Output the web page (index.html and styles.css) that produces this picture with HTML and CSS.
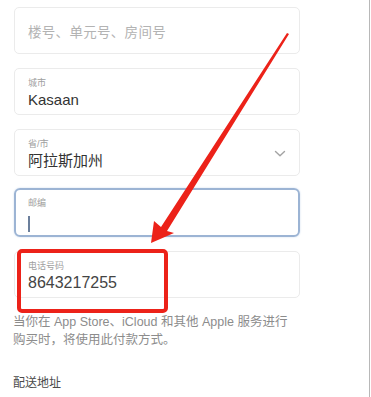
FILE: index.html
```html
<!DOCTYPE html>
<html lang="zh">
  <head>
    <meta charset="utf-8" />
    <title>付款方式</title>
    <meta name="viewport" content="width=device-width, initial-scale=1" />
    <link rel="stylesheet" href="styles.css">
  </head>
  <body>
    <div class="page">
      <div class="form">
        <div class="field field-plain">
          <span class="placeholder">楼号、单元号、房间号</span>
        </div>

        <div class="field">
          <div class="label">城市</div>
          <div class="value">Kasaan</div>
        </div>

        <div class="field field-select">
          <div>
            <div class="label">省/市</div>
            <div class="value">阿拉斯加州</div>
          </div>
          <svg class="chevron" width="12" height="8" viewBox="0 0 12 8">
            <path d="M1.5 1.5 L6 5.8 L10.5 1.5" fill="none" stroke="#a3a3a3" stroke-width="1.4" stroke-linecap="round" stroke-linejoin="round" />
          </svg>
        </div>

        <div class="field field-focus">
          <div class="label">邮编</div>
          <div class="value"><span class="caret"></span></div>
        </div>

        <div class="field">
          <div class="label">电话号码</div>
          <div class="value value-num">8643217255</div>
        </div>
      </div>

      <p class="hint">当你在 App Store、iCloud 和其他 Apple 服务进行<br />购买时，将使用此付款方式。</p>

      <h3 class="section">配送地址</h3>

      <!-- annotation drawn on top of the screen capture -->
      <div class="mark-box"></div>
      <svg class="mark-arrow" width="371" height="397" viewBox="0 0 371 397">
        <polygon points="151,243 154,221 161,227 287,33 289,34 167,231 174,233" fill="#ec2219" />
      </svg>
    </div>
  </body>
</html>
```

FILE: styles.css
```css
html,
body {
  margin: 0;
  background: #fff;
}
body {
  font-family: "Liberation Sans", "Noto Sans CJK SC", sans-serif;
  color: #333;
}
.page {
  position: relative;
  width: 369px;
  height: 397px;
  border-right: 1px solid #b8b8b8;
  overflow: hidden;
}
.form {
  display: flex;
  flex-direction: column;
  gap: 14px;
  padding: 7px 0 0 14px;
  width: 286px;
}
.field {
  box-sizing: border-box;
  height: 47px;
  border: 1px solid #ebebeb;
  border-radius: 5px;
  padding: 8px 0 0 13px;
}
.field-plain {
  display: flex;
  align-items: center;
  padding-top: 0;
}
.placeholder {
  font-size: 13.5px;
  color: #b3b3b3;
  letter-spacing: 0.3px;
}
.label {
  font-size: 9px;
  line-height: 13px;
  color: #a0a0a0;
}
.value {
  font-size: 15px;
  line-height: 20px;
  color: #333;
}
.value-num {
  font-size: 16px;
  color: #444;
}
.field-select {
  display: flex;
  justify-content: space-between;
  align-items: flex-start;
  padding-right: 13px;
}
.chevron {
  margin-top: 12px;
}
.field-focus {
  height: 49px;
  margin-top: -2px;
  border: 2px solid #9cb4d4;
  border-radius: 6px;
  padding: 7px 0 0 12px;
  box-shadow: 0 0 2px #c9d8ec;
}
.caret {
  display: inline-block;
  width: 2px;
  height: 16px;
  margin-top: 6px;
  background: #6b7f9c;
  vertical-align: top;
}
.hint {
  margin: 15px 0 0 13px;
  font-size: 12.5px;
  line-height: 18px;
  color: #8c8c8c;
}
.section {
  margin: 25px 0 0 13px;
  font-size: 12px;
  line-height: 18px;
  font-weight: normal;
  color: #4a4a4a;
}
.mark-box {
  position: absolute;
  left: 17px;
  top: 249px;
  width: 151px;
  height: 64px;
  box-sizing: border-box;
  border: 4px solid #ec2219;
  border-radius: 5px;
}
.mark-arrow {
  position: absolute;
  left: 0;
  top: 0;
}
```
